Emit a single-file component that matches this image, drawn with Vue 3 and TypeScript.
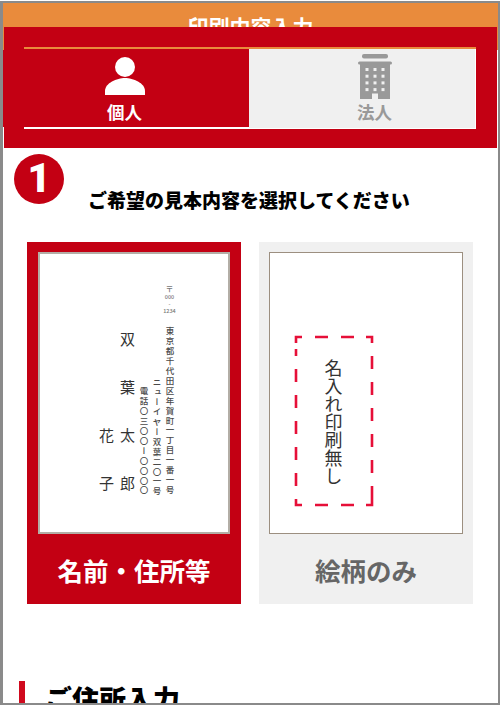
<script setup lang="ts">
const windows: number[] = Array.from({ length: 12 }, (_, i) => i)
</script>

<template>
  <div class="page">
    <header class="title-bar">印刷内容入力</header>

    <div class="sticky-panel">
      <div class="tabs">
        <div class="tab active">
          <svg class="tab-icon" width="40" height="48" viewBox="0 0 40 48" aria-hidden="true">
            <circle cx="20" cy="14" r="10" fill="#fff" />
            <path d="M0 42v-4c0-8 12-13 20-13s20 5 20 13v4z" fill="#fff" />
          </svg>
          <span class="tab-label">個人</span>
        </div>
        <div class="tab corp">
          <svg class="tab-icon" width="34" height="48" viewBox="0 0 34 48" aria-hidden="true">
            <rect x="4" y="3" width="26" height="4.5" rx="2" fill="#999" />
            <rect x="0" y="10.5" width="34" height="3" rx="1.5" fill="#999" />
            <rect x="2" y="12" width="30" height="36" fill="#999" />
            <rect
              v-for="i in windows"
              :key="i"
              :x="7.5 + (i % 3) * 8"
              :y="17 + Math.floor(i / 3) * 6.7"
              width="3"
              height="3"
              fill="#f0f0f0"
            />
            <rect x="14" y="42.5" width="6" height="5.5" fill="#f0f0f0" />
          </svg>
          <span class="tab-label">法人</span>
        </div>
      </div>
    </div>
    <div class="edge-bleed"></div>

    <main class="content">
      <div class="step">
        <div class="step-num">1</div>
        <h2 class="step-text">ご希望の見本内容を選択してください</h2>
      </div>

      <div class="cards">
        <div class="card selected">
          <div class="preview sample">
            <div class="col addr">
              <div class="postal">
                <span class="zip-mark">〒</span>
                <span>000</span>
                <span>-</span>
                <span>1234</span>
              </div>
              <div class="vtext addr-line">東京都千代田区年賀町一丁目一番一号</div>
            </div>
            <div class="col vtext bldg">ニューイヤー双葉二〇一号</div>
            <div class="col vtext tel">電話〇三〇〇ー〇〇〇〇</div>
            <div class="col vtext surname">双葉太郎</div>
            <div class="col vtext given">花子</div>
          </div>
          <div class="card-label">名前・住所等</div>
        </div>

        <div class="card">
          <div class="preview blank">
            <div class="dash-box">
              <svg class="dash-svg" width="80" height="172" viewBox="0 0 80 172" aria-hidden="true">
                <path
                  d="M2 8V2H8M21 2H34M47 2H60M72 2H78V8M78 21V34M78 47V60M78 73V86M78 99V112M78 125V138M78 151V164M78 164V170H72M60 170H47M34 170H21M8 170H2V164M2 151V138M2 125V112M2 99V86M2 73V60M2 47V34M2 21V14"
                  fill="none"
                  stroke="#e60f38"
                  stroke-width="2.6"
                />
              </svg>
              <span class="vtext no-print">名入れ印刷無し</span>
            </div>
          </div>
          <div class="card-label">絵柄のみ</div>
        </div>
      </div>

      <div class="section-head">
        <span class="section-bar"></span>
        <h2 class="section-title">ご住所入力</h2>
      </div>
    </main>
  </div>
</template>

<style scoped>
.page {
  position: relative;
  box-sizing: border-box;
  width: 500px;
  height: 704px;
  margin-top: 1px;
  border: 2px solid #8a8a8a;
  border-left-width: 3px;
  overflow: hidden;
  background: #fff;
  font-family: "Noto Sans CJK JP", "Noto Sans", sans-serif;
}
.title-bar {
  height: 47px;
  padding-top: 9px;
  box-sizing: border-box;
  background: #e98b3c;
  color: #fff;
  font-size: 21px;
  font-weight: 700;
  line-height: 28px;
  text-align: center;
}
.sticky-panel {
  position: absolute;
  top: 24px;
  left: 1px;
  width: 493px;
  height: 121px;
  box-sizing: border-box;
  padding: 20px 20px 0 20px;
  background: #c30013;
}
.edge-bleed {
  position: absolute;
  top: 47px;
  left: 0;
  width: 1px;
  height: 77px;
  background: #c30013;
}
.tabs {
  display: flex;
  width: 452px;
  height: 82px;
  box-sizing: border-box;
  border-top: 2.5px solid #e98b3c;
}
.tab {
  flex: 1;
  display: flex;
  flex-direction: column;
  align-items: center;
  box-sizing: border-box;
  background: #f0f0f0;
  color: #999;
  border-bottom: 1px solid #fff;
  border-right: 1px solid #fff;
}
.tab.active {
  padding-right: 24px;
  background: #c30013;
  color: #fff;
  border-right: 0;
  border-bottom: 2px solid #fff;
}
.tab.corp {
  padding-left: 25px;
}
.tab-icon {
  display: block;
  flex: none;
  margin-top: 4px;
}
.tab.corp .tab-icon {
  margin-top: 2px;
}
.tab-label {
  font-size: 17.5px;
  font-weight: 700;
  line-height: 22px;
}
.tab.corp .tab-label {
  margin-top: 2px;
}
.content {
  padding-top: 104px;
}
.step {
  display: flex;
  align-items: flex-start;
  gap: 24px;
  padding-left: 11px;
}
.step-num {
  flex: none;
  width: 50px;
  height: 50px;
  border-radius: 50%;
  background: #c30013;
  color: #fff;
  font-family: "Roboto", "Liberation Sans", sans-serif;
  font-size: 40px;
  font-weight: 900;
  line-height: 50px;
  text-align: center;
}
.step-text {
  margin: 33px 0 0;
  color: #000;
  font-size: 19px;
  font-weight: 900;
  line-height: 25px;
  white-space: nowrap;
}
.cards {
  display: flex;
  gap: 18px;
  margin-top: 30px;
  padding-left: 24px;
}
.card {
  display: flex;
  flex-direction: column;
  width: 214px;
  height: 362px;
  box-sizing: border-box;
  padding: 10px 10px 0;
  background: #f0f0f0;
  color: #666;
}
.card.selected {
  padding: 10px 11px 0;
  background: #c30013;
  color: #fff;
}
.preview {
  flex: none;
  height: 282px;
  box-sizing: border-box;
  background: #fff;
}
.sample {
  display: flex;
  flex-direction: row-reverse;
  align-items: flex-start;
  border: 2px solid #b3aea6;
  color: #444;
  padding-right: 52px;
}
.blank {
  border: 1.5px solid #9c8f80;
  padding: 81.5px 0 0 23.5px;
}
.vtext {
  writing-mode: vertical-rl;
  text-orientation: upright;
}
.col {
  flex: none;
  width: 13px;
  font-size: 8.5px;
  font-weight: 500;
  line-height: 13px;
  letter-spacing: 1.4px;
  color: #4a4a4a;
}
.addr {
  margin-top: 30px;
  display: flex;
  flex-direction: column;
  align-items: center;
}
.postal {
  display: flex;
  flex-direction: column;
  align-items: center;
  height: 43px;
  font-size: 5.5px;
  line-height: 7px;
  letter-spacing: 0;
  color: #777;
}
.zip-mark {
  font-size: 8px;
  line-height: 10px;
}
.bldg {
  margin-top: 124px;
}
.tel {
  margin-top: 133px;
}
.surname {
  width: 19px;
  margin: 78px 0 0 0;
  font-size: 15px;
  font-weight: 400;
  line-height: 19px;
  letter-spacing: 33px;
  color: #333;
}
.given {
  width: 19px;
  margin: 174px 2px 0 0;
  font-size: 15px;
  font-weight: 400;
  line-height: 19px;
  letter-spacing: 33px;
  color: #333;
}
.dash-box {
  position: relative;
  display: flex;
  justify-content: center;
  width: 80px;
  height: 172px;
  box-sizing: border-box;
  padding-top: 24px;
}
.dash-svg {
  position: absolute;
  top: 0;
  left: 0;
}
.no-print {
  font-size: 18px;
  font-weight: 400;
  line-height: 22px;
  color: #333;
}
.card-label {
  flex: 1;
  display: flex;
  align-items: center;
  justify-content: center;
  font-size: 25.5px;
  font-weight: 700;
  white-space: nowrap;
}
.section-head {
  display: flex;
  align-items: flex-start;
  gap: 20px;
  margin: 77px 0 0 16px;
}
.section-bar {
  flex: none;
  width: 6px;
  height: 40px;
  background: #d00a1e;
}
.section-title {
  margin: -2px 0 0;
  color: #000;
  font-size: 27px;
  font-weight: 900;
  line-height: 40px;
}
</style>

<style>
body {
  margin: 0;
  background: #fff;
}
</style>
